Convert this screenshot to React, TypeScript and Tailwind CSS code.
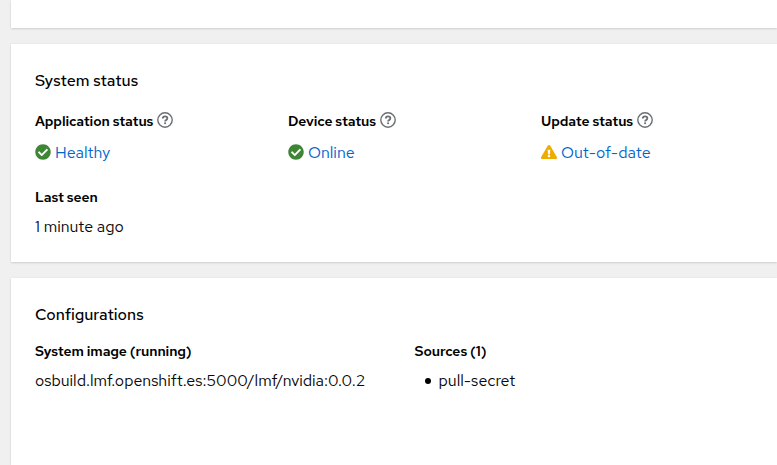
import React from 'react';

const Help = () => (
  <svg viewBox="0 0 16 16" className="relative -top-px ml-1 h-4 w-4 shrink-0" fill="none" stroke="#6a6e73">
    <circle cx="8" cy="8" r="7.2" strokeWidth="1.4" />
    <path d="M5.8 6.5c0-1.4 1-2.2 2.25-2.2 1.4 0 2.3.8 2.3 1.95 0 1-.6 1.5-1.3 1.9-.7.4-.95.65-.95 1.25" strokeWidth="1.8" />
    <circle cx="8.1" cy="11.2" r="1.05" fill="#6a6e73" stroke="none" />
  </svg>
);
const Check = () => (
  <svg viewBox="0 0 512 512" className="relative -top-px h-4 w-4 shrink-0" fill="#3e8635">
    <path d="M504 256c0 136.967-111.033 248-248 248S8 392.967 8 256 119.033 8 256 8s248 111.033 248 248zM227.314 387.314l184-184c6.248-6.248 6.248-16.379 0-22.627l-22.627-22.627c-6.248-6.249-16.379-6.249-22.628 0L216 308.118l-70.059-70.059c-6.248-6.248-16.379-6.248-22.628 0l-22.627 22.627c-6.248 6.248-6.248 16.379 0 22.627l104 104c6.249 6.249 16.379 6.249 22.628.001z" />
  </svg>
);
const Warn = () => (
  <svg viewBox="0 0 576 512" className="relative -top-px h-4 w-4 shrink-0" fill="#f0ab00">
    <path d="M569.517 440.013C587.975 472.007 564.806 512 527.94 512H48.054c-36.937 0-59.999-40.055-41.577-71.987L246.423 23.985c18.467-32.009 64.72-31.951 83.154 0l239.94 416.028zM288 354c-25.405 0-46 20.595-46 46s20.595 46 46 46 46-20.595 46-46-20.595-46-46-46zm-43.673-165.346l7.418 136c.347 6.364 5.609 11.346 11.982 11.346h48.546c6.373 0 11.635-4.982 11.982-11.346l7.418-136c.375-6.874-5.098-12.654-11.982-12.654h-63.383c-6.884 0-12.356 5.78-11.981 12.654z" />
  </svg>
);

const cardShadow = 'bg-white shadow-[0_1px_2px_0_rgba(3,3,3,0.12),0_0_2px_0_rgba(3,3,3,0.06)]';
const label = 'text-sm font-semibold tracking-[-0.11px] text-black';

const statuses = [
  { label: 'Application status', value: 'Healthy', icon: <Check /> },
  { label: 'Device status', value: 'Online', icon: <Check /> },
  { label: 'Update status', value: 'Out-of-date', icon: <Warn /> },
];

export default function App() {
  return (
    <div className="flex h-[465px] w-[777px] flex-col gap-4 overflow-hidden bg-[#f0f0f0] pl-[11px] font-['Red_Hat_Text',Lexend,Figtree,Inter,sans-serif] text-base leading-6 text-[#080808]">
      <section className={`h-7 shrink-0 ${cardShadow}`} />
      <section className={`h-[218px] shrink-0 pl-6 pt-[25px] ${cardShadow}`}>
        <h2 className="font-medium text-black">System status</h2>
        <dl className="mt-[17px] grid grid-cols-[253px_253px_1fr]">
          {statuses.map((s) => (
            <div key={s.label}>
              <dt className={`flex h-[22px] items-center ${label}`}>{s.label}<Help /></dt>
              <dd className="mt-[9px] flex items-center gap-1 text-[#0066cc]">{s.icon}<span>{s.value}</span></dd>
            </div>
          ))}
        </dl>
        <div className="mt-[22px]">
          <div className={label}>Last seen</div>
          <div className="mt-2">1 minute ago</div>
        </div>
      </section>
      <section className={`flex-1 pl-6 pt-[25px] ${cardShadow}`}>
        <h2 className="font-medium text-black">Configurations</h2>
        <div className="mt-[14px] grid grid-cols-[379.5px_1fr]">
          <div>
            <div className={label}>System image (running)</div>
            <div className="mt-2 tracking-[-0.02px]">osbuild.lmf.openshift.es:5000/lmf/nvidia:0.0.2</div>
          </div>
          <div>
            <div className={label}>Sources (1)</div>
            <ul className="mt-2 pl-[10px]">
              <li className="flex items-center">
                <span className="mr-2 h-1.5 w-1.5 rounded-full bg-black" />
                pull-secret
              </li>
            </ul>
          </div>
        </div>
      </section>
    </div>
  );
}
